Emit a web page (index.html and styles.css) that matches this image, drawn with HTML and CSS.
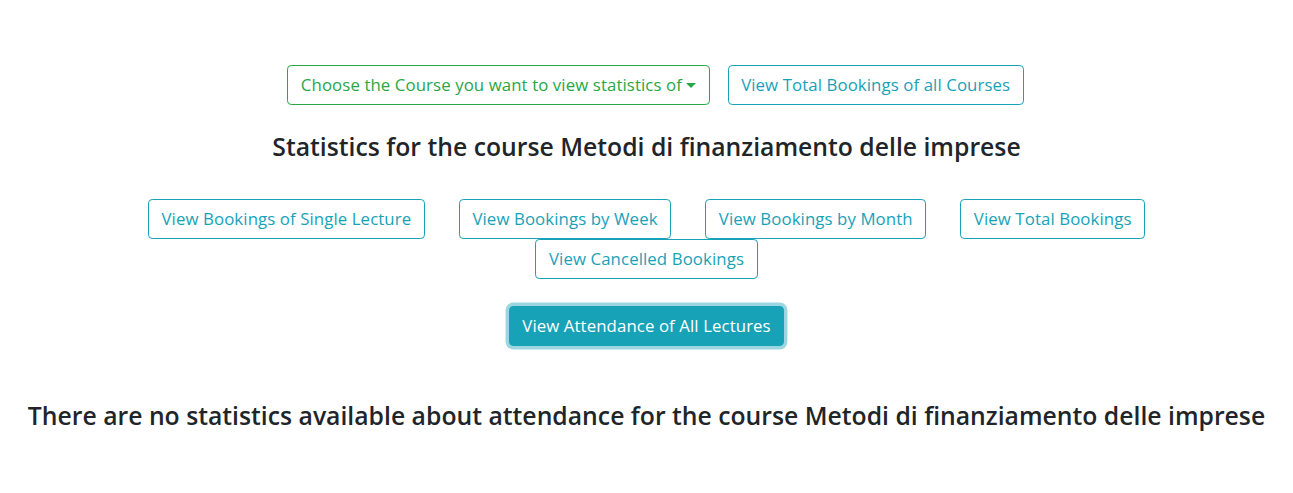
FILE: index.html
```html
<!DOCTYPE html>
<html lang="en">
<head>
<meta charset="utf-8">
<title>Statistics</title>
<link rel="stylesheet" href="styles.css">
</head>
<body>
<div class="container">
  <div class="top-row">
    <button class="btn btn-outline-success dropdown-toggle">Choose the Course you want to view statistics of</button>
    <button class="btn btn-outline-info">View Total Bookings of all Courses</button>
  </div>
  <h4 class="title">Statistics for the course Metodi di finanziamento delle imprese</h4>
  <div class="view-row">
    <button class="btn btn-outline-info">View Bookings of Single Lecture</button>
    <button class="btn btn-outline-info">View Bookings by Week</button>
    <button class="btn btn-outline-info">View Bookings by Month</button>
    <button class="btn btn-outline-info">View Total Bookings</button>
    <button class="btn btn-outline-info">View Cancelled Bookings</button>
  </div>
  <div class="attendance-row">
    <button class="btn btn-info focus">View Attendance of All Lectures</button>
  </div>
</div>
<h4 class="message">There are no statistics available about attendance for the course Metodi di finanziamento delle imprese</h4>
</body>
</html>
```

FILE: styles.css
```css
* { box-sizing: border-box; }

body {
  margin: 0;
  font-family: "Open Sans", "Noto Sans", sans-serif;
  font-size: 16.8px;
  color: #212529;
  background: #fff;
}

.container {
  max-width: 1140px;
  margin: 0 auto;
  padding: 65px 15px 0;
}

.top-row {
  display: flex;
  justify-content: center;
}

.top-row .btn {
  margin-left: 18px;
}

.btn {
  display: inline-block;
  font-family: inherit;
  font-size: 16.8px;
  font-weight: 400;
  line-height: 25.2px;
  letter-spacing: 0.1px;
  padding: 6.4px 12.6px;
  border: 1px solid transparent;
  border-radius: 4.2px;
  background: transparent;
  text-align: center;
  white-space: nowrap;
  cursor: pointer;
}

.btn-outline-success {
  color: #28a745;
  border-color: #28a745;
}

.btn-outline-info {
  color: #17a2b8;
  border-color: #17a2b8;
}

.btn-info {
  color: #fff;
  background: #17a2b8;
  border-color: #17a2b8;
}

.btn-info.focus {
  box-shadow: 0 0 0 3.4px rgba(58, 176, 195, 0.5);
}

.dropdown-toggle::after {
  content: "";
  display: inline-block;
  margin-left: 4px;
  vertical-align: 3.5px;
  border-top: 5px solid currentColor;
  border-left: 5px solid transparent;
  border-right: 5px solid transparent;
}

.title,
.message {
  font-weight: 600;
  font-size: 24.75px;
  line-height: 30px;
  text-align: center;
  margin: 0;
}

.title {
  margin-top: 27px;
}

.view-row {
  display: flex;
  flex-wrap: wrap;
  justify-content: center;
  column-gap: 34px;
  margin-top: 37px;
}

.attendance-row {
  display: flex;
  justify-content: center;
  margin-top: 27px;
}

.message {
  margin-top: 55px;
}
```
